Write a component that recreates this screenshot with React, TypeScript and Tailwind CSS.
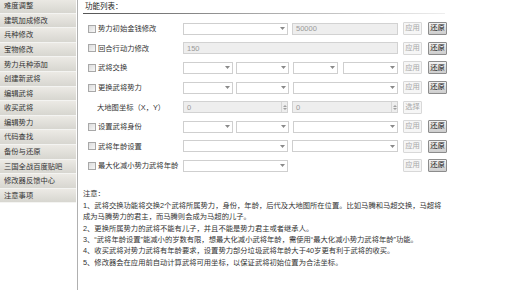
const menu = [
  '难度调整',
  '建筑加成修改',
  '兵种修改',
  '宝物修改',
  '势力兵种添加',
  '创建新武将',
  '编辑武将',
  '收买武将',
  '编辑势力',
  '代码查找',
  '备份与还原',
  '三国全战百度贴吧',
  '修改器反馈中心',
  '注意事项',
];

function Arrow() {
  return (
    <svg width="5" height="3" viewBox="0 0 5 3" className="shrink-0">
      <path d="M0 0h5L2.5 3z" fill="#8a8a8a" />
    </svg>
  );
}

function Select({ w }: { w: string }) {
  return (
    <div className={`${w} flex h-[12px] items-center justify-end border border-[#cfcfcf] bg-white pr-[2px]`}>
      <Arrow />
    </div>
  );
}

function Field({ w, value, disabled }: { w: string; value?: string; disabled?: boolean }) {
  return (
    <div
      className={`${w} flex h-[12px] items-center border border-[#d2d2d2] pl-[3px] text-[7.5px] text-[#9a9a9a] ${
        disabled ? 'bg-[#eeeeee]' : 'bg-white'
      }`}
    >
      {value}
    </div>
  );
}

function Spinner({ w }: { w: string }) {
  return (
    <div className={`${w} flex h-[12px] items-center justify-between border border-[#d2d2d2] bg-[#eeeeee] pl-[3px] text-[7.5px] text-[#9a9a9a]`}>
      <span>0</span>
      <div className="flex h-full w-[6px] flex-col items-center justify-center gap-[1px] border-l border-[#d6d6d6]">
        <svg width="4" height="2" viewBox="0 0 4 2">
          <path d="M0 2h4L2 0z" fill="#a0a0a0" />
        </svg>
        <svg width="4" height="2" viewBox="0 0 4 2">
          <path d="M0 0h4L2 2z" fill="#a0a0a0" />
        </svg>
      </div>
    </div>
  );
}

function Btn({ label, active }: { label: string; active?: boolean }) {
  return active ? (
    <div className="flex h-[13px] w-[19px] items-center justify-center rounded-[1px] border border-[#8c8c8c] bg-gradient-to-b from-[#f2f2f2] to-[#cdcdcd] text-[7.3px] text-[#222]">
      {label}
    </div>
  ) : (
    <div className="flex h-[13px] w-[19px] items-center justify-center rounded-[1px] border border-[#d8d8d8] bg-[#f6f6f6] text-[7.3px] text-[#a8a8a8]">
      {label}
    </div>
  );
}

function Check() {
  return <div className="h-[8px] w-[8px] shrink-0 border border-[#a8a8a8] bg-gradient-to-br from-[#dcdcdc] to-[#f7f7f7]" />;
}

function Row({
  label,
  check = true,
  children,
  buttons = 'both',
}: {
  label: string;
  check?: boolean;
  children: React.ReactNode;
  buttons?: 'both' | 'pick';
}) {
  return (
    <div className="flex h-[19.6px] items-center">
      <div className={`flex w-[100px] items-center gap-[2px] ${check ? 'pl-[5px]' : 'pl-[14px]'}`}>
        {check && <Check />}
        <span className="whitespace-nowrap text-[7.3px] leading-none text-[#333]">{label}</span>
      </div>
      <div className="flex w-[215px] items-center">{children}</div>
      <div className="ml-[5px] flex gap-[6px]">
        {buttons === 'both' ? (
          <>
            <Btn label="应用" />
            <Btn label="还原" active />
          </>
        ) : (
          <Btn label="选择" />
        )}
      </div>
    </div>
  );
}

export default function App() {
  return (
    <div className="flex h-[290px] w-[507px] overflow-hidden bg-white font-['Liberation_Sans','Noto_Sans_CJK_SC',sans-serif]">
      <div className="-mt-[1px] flex w-[76px] shrink-0 flex-col">
        {menu.map(m => (
          <div
            key={m}
            className="flex h-[14.6px] items-center border-b border-[#f4f4f2] bg-gradient-to-b from-[#eceae5] to-[#d7d6d0] pl-[4px] text-[7.3px] leading-none text-[#333]"
          >
            {m}
          </div>
        ))}
      </div>
      <div className="ml-[1px] w-px shrink-0 bg-[#b0b0b0]" />

      <div className="flex-1 pl-[5px]">
        <div className="flex h-[13px] items-center pl-[2px] text-[7.5px] leading-none text-[#222]">功能列表：</div>
        <div className="h-px w-[362px] bg-gradient-to-r from-[#555] via-[#aaa] to-[#eee]" />

        <div className="pt-[5px]">
          <Row label="势力初始金钱修改">
            <Select w="w-[105px]" />
            <div className="ml-[4px]">
              <Field w="w-[106px]" value="50000" disabled />
            </div>
          </Row>
          <Row label="回合行动力修改">
            <Field w="w-[215px]" value="150" disabled />
          </Row>
          <Row label="武将交换">
            <Select w="w-[50px]" />
            <div className="ml-[3px]">
              <Select w="w-[53px]" />
            </div>
            <div className="ml-[4px]">
              <Select w="w-[45px]" />
            </div>
            <div className="ml-[5px]">
              <Select w="w-[55px]" />
            </div>
          </Row>
          <Row label="更换武将势力">
            <Select w="w-[50px]" />
            <div className="ml-[3px]">
              <Select w="w-[53px]" />
            </div>
            <div className="ml-[4px]">
              <Select w="w-[105px]" />
            </div>
          </Row>
          <Row label="大地图坐标（X，Y）" check={false} buttons="pick">
            <Spinner w="w-[105px]" />
            <div className="ml-[4px]">
              <Spinner w="w-[106px]" />
            </div>
          </Row>
          <Row label="设置武将身份">
            <Select w="w-[50px]" />
            <div className="ml-[3px]">
              <Select w="w-[53px]" />
            </div>
            <div className="ml-[4px]">
              <Select w="w-[105px]" />
            </div>
          </Row>
          <Row label="武将年龄设置">
            <Select w="w-[105px]" />
            <div className="ml-[4px]">
              <Select w="w-[106px]" />
            </div>
          </Row>
          <Row label="最大化减小势力武将年龄">
            <Select w="w-[105px]" />
          </Row>
        </div>

        <div className="mt-[12px] whitespace-nowrap text-[7.3px] leading-[11.3px] text-[#333]">
          <div className="mb-[1px]">注意：</div>
          <div>1、武将交换功能将交换2个武将所属势力，身份，年龄，后代及大地图所在位置。比如马腾和马超交换，马超将</div>
          <div>成为马腾势力的君主，而马腾则会成为马超的儿子。</div>
          <div>2、更换所属势力的武将不能有儿子，并且不能是势力君主或者继承人。</div>
          <div>3、“武将年龄设置”能减小的岁数有限，想最大化减小武将年龄，需使用“最大化减小势力武将年龄”功能。</div>
          <div>4、收买武将对势力武将有年龄要求，设置势力部分垃圾武将年龄大于40岁更有利于武将的收买。</div>
          <div>5、修改器会在应用前自动计算武将可用坐标，以保证武将初始位置为合法坐标。</div>
        </div>
      </div>
    </div>
  );
}
